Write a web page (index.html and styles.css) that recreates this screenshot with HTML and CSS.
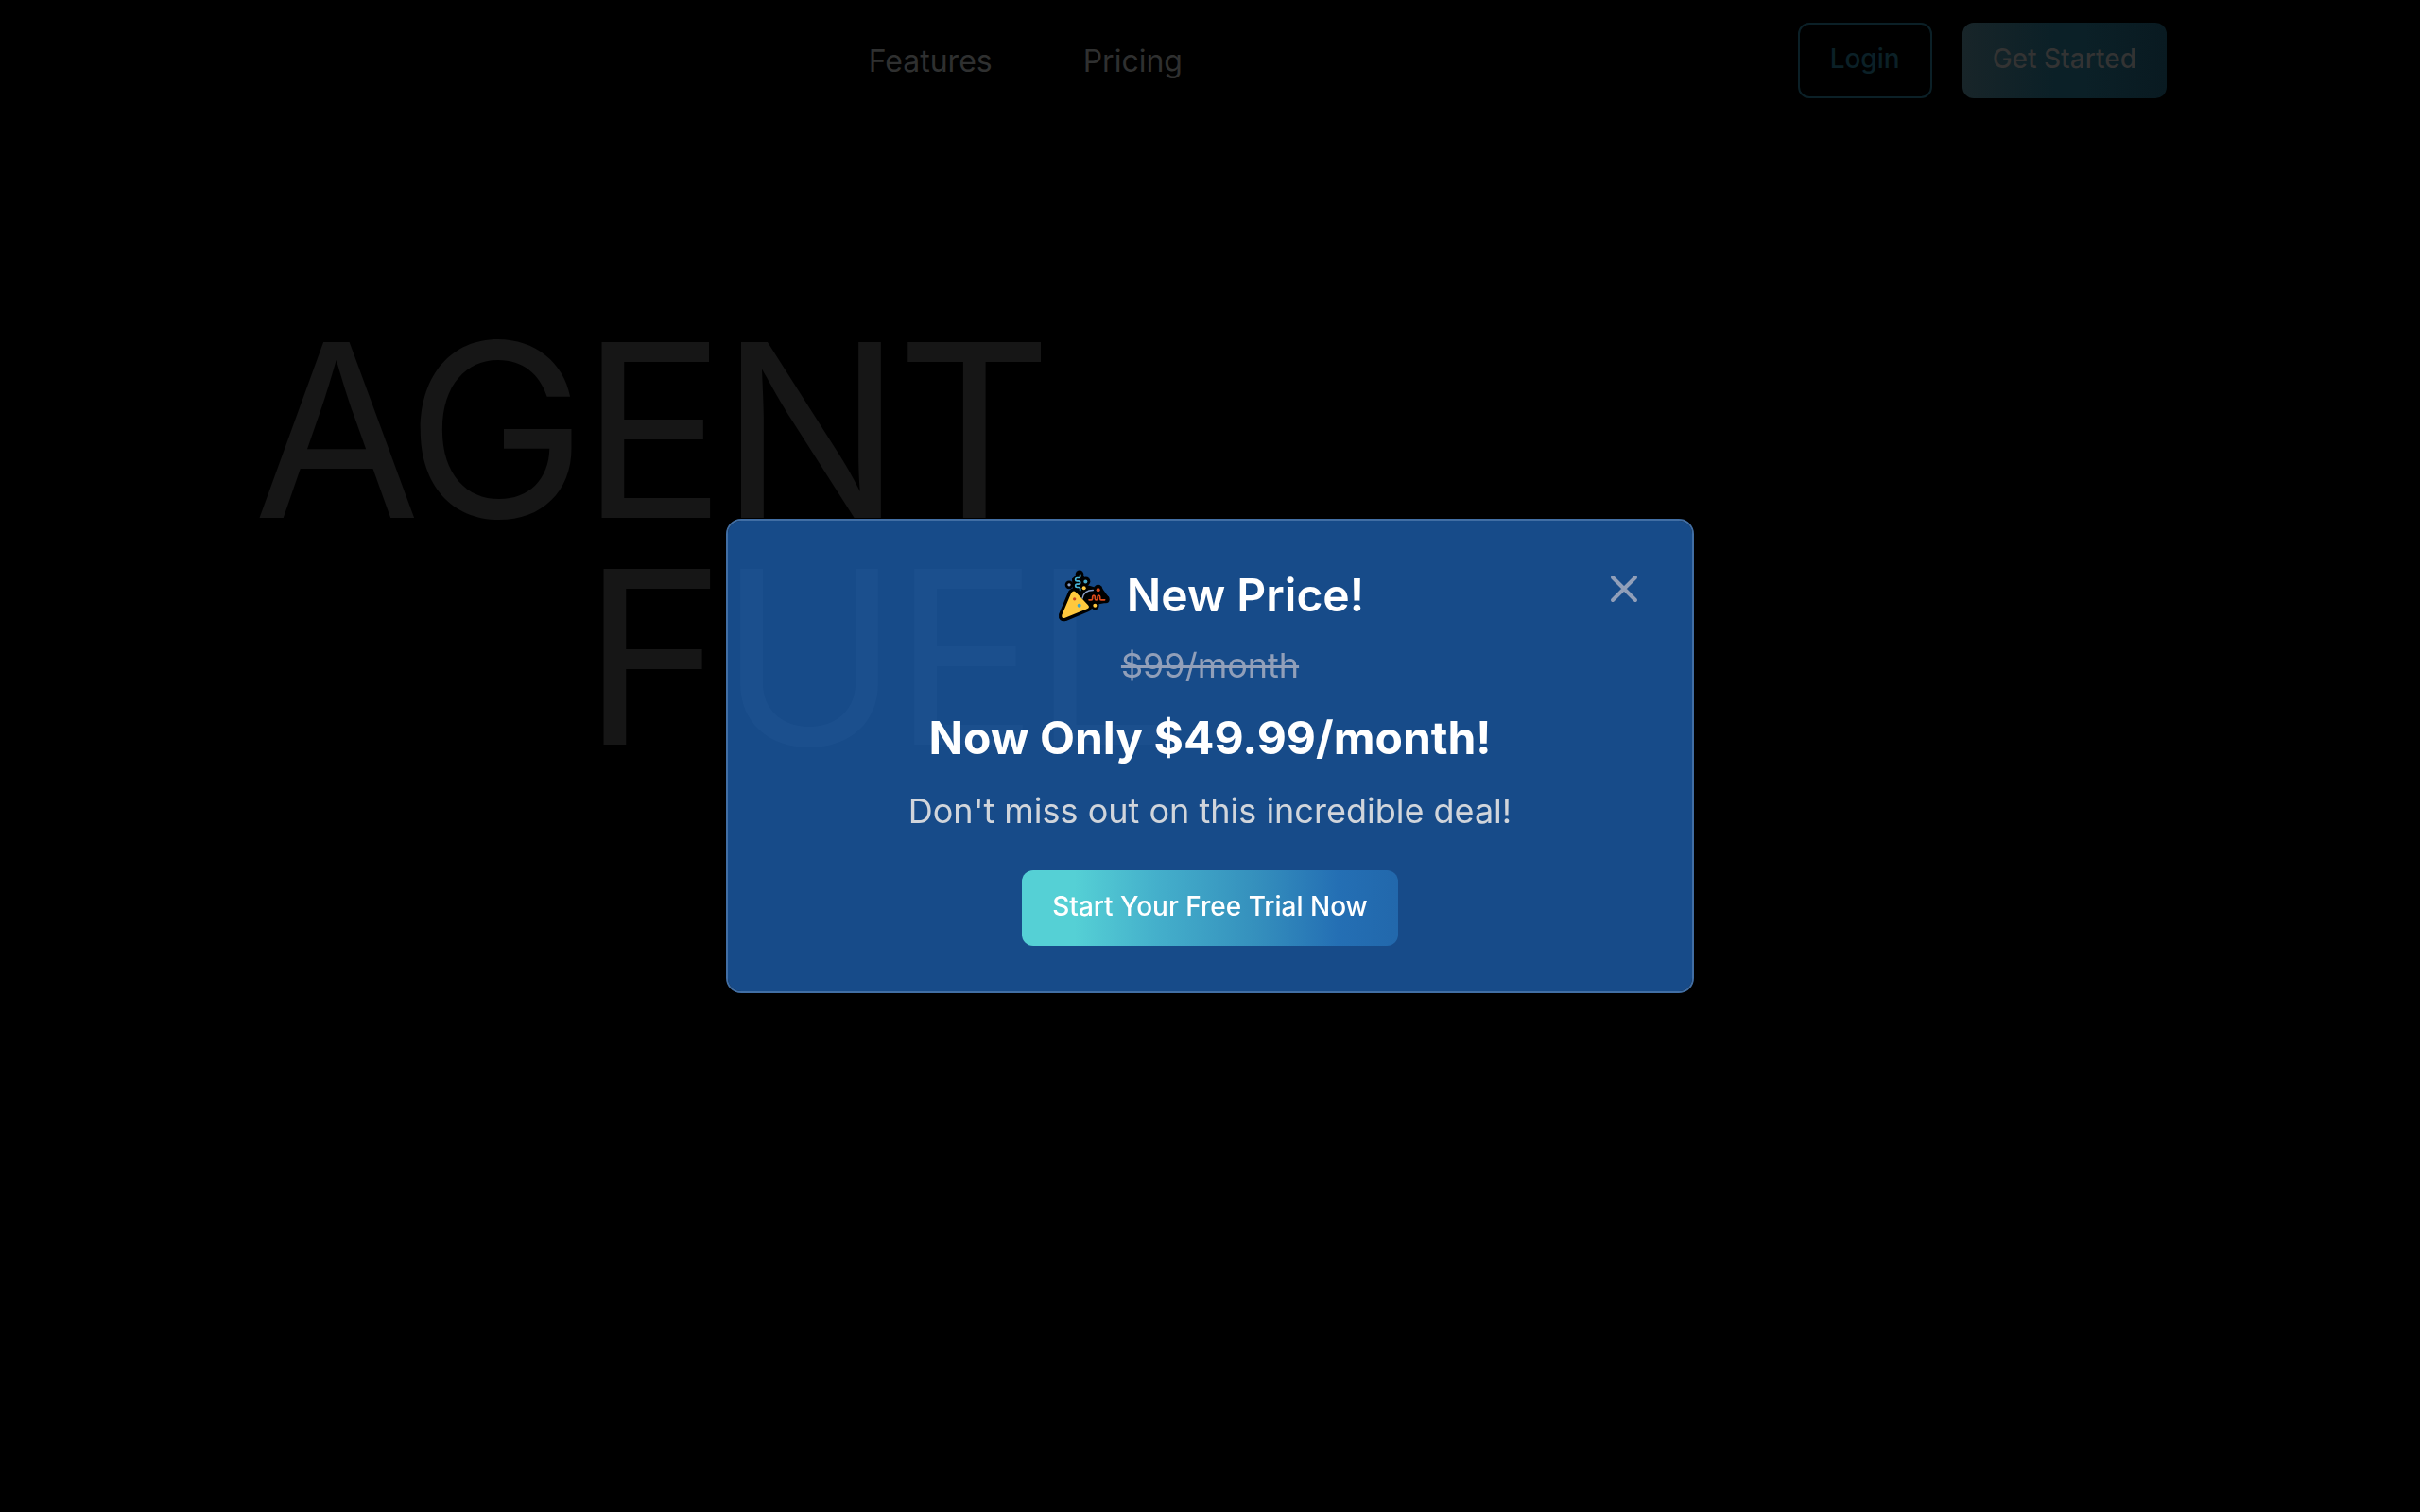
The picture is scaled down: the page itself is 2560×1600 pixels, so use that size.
FILE: index.html
```
<!DOCTYPE html>
<html lang="en">
<head>
    <meta charset="UTF-8">
    <meta name="viewport" content="width=device-width, initial-scale=1.0">
    <title>Agent Fuel</title>
    <link rel="stylesheet" href="styles.css">
</head>
<body>
    <header class="header">
        <div class="logo"></div>
        <nav class="nav">
            <a href="#features">Features</a>
            <a href="#pricing">Pricing</a>
        </nav>
        <div class="actions">
            <button type="button" class="btn btn-outline">Login</button>
            <button type="button" class="btn btn-dim">Get Started</button>
        </div>
    </header>

    <main class="hero">
        <h1 class="hero-title">
            <span>AGENT</span>
            <span class="hero-indent">FUEL</span>
        </h1>
    </main>

    <!-- Promo modal -->
    <div class="overlay">
        <div class="modal" role="dialog" aria-modal="true" aria-labelledby="promo-title">
            <button type="button" class="modal-close" aria-label="Close">
                <svg viewBox="0 0 24 24" fill="none" stroke="currentColor" stroke-width="2" stroke-linecap="round">
                    <path d="M6 6l12 12M18 6L6 18"/>
                </svg>
            </button>
            <h2 class="modal-title" id="promo-title">
                <svg class="popper" viewBox="85 68 180 164" fill="none" stroke-linecap="round" stroke-linejoin="round" aria-hidden="true">
                    <g fill="#000">
                        <circle cx="127" cy="115" r="13"/>
                        <circle cx="180" cy="104" r="14"/>
                        <circle cx="160" cy="82" r="13"/>
                        <circle cx="219" cy="129" r="14"/>
                        <circle cx="209" cy="181" r="13"/>
                        <circle cx="243" cy="161" r="12"/>
                        <path d="M136 96L150 84L172 84L186 116L206 122L230 124L252 154L246 172L222 176L190 182L140 150Z"/>
                    </g>
                    <path d="M134 140Q142 130 150 140L187 179Q194 187 184 191L114 220Q102 223 104 211Z" fill="#ffc83d" stroke="#000" stroke-width="20"/>
                    <path d="M134 140Q142 130 150 140L187 179Q194 187 184 191L114 220Q102 223 104 211Z" fill="#ffc83d"/>
                    <path d="M162 83v6q0 4-5 4h-5q-5 0-5 5t5 5h5q5 0 5 5t-5 5h-5q-5 0-5 5t5 5h5q5 0 5 5v5" stroke="#45b3d6" stroke-width="5"/>
                    <path d="M169 158Q174 132 203 132" stroke="#8b9fc7" stroke-width="4"/>
                    <path d="M190 163h7q4 0 4-5v-4q0-5 4-5t4 5v4q0 5 4 5t4-5v-4q0-5 4-5t4 5v4q0 5 4 5h11" stroke="#e04a1a" stroke-width="5"/>
                    <circle cx="127" cy="115" r="5" fill="#8b9fc7"/>
                    <circle cx="179" cy="105" r="6" fill="#45a5c4"/>
                    <circle cx="174" cy="125" r="6" fill="#ffc83d"/>
                    <circle cx="219" cy="131" r="6" fill="#d94a1d"/>
                    <circle cx="209" cy="181" r="6" fill="#ffc83d"/>
                    <circle cx="144" cy="160" r="5" fill="#c9471f"/>
                    <circle cx="159" cy="181" r="6" fill="#45a5c4"/>
                </svg>
                New Price!
            </h2>
            <p class="old-price"><s>$99/month</s></p>
            <p class="new-price">Now Only $49.99/month!</p>
            <p class="note">Don't miss out on this incredible deal!</p>
            <button type="button" class="btn btn-primary">Start Your Free Trial Now</button>
        </div>
    </div>
</body>
</html>
```
FILE: styles.css
```
* {
    box-sizing: border-box;
}
body {
    margin: 0;
    min-height: 100vh;
    background: #000;
    font-family: Inter, sans-serif;
    color: #fff;
}
h1, h2, p {
    margin: 0;
}
.header {
    display: flex;
    align-items: center;
    justify-content: space-between;
    max-width: 2024px;
    margin: 0 auto;
    padding: 24px 0;
}
.nav {
    display: flex;
    gap: 96px;
    padding-top: 2px;
}
.nav a {
    color: #2f3030;
    font-size: 32px;
    line-height: 48px;
    text-decoration: none;
}
.actions {
    display: flex;
    gap: 32px;
}
.btn {
    height: 80px;
    padding: 0 32px 4px;
    border: 0;
    border-radius: 12px;
    font-family: inherit;
    font-size: 28px;
    font-weight: 500;
    line-height: 40px;
    color: #fff;
    cursor: pointer;
}
.btn-outline {
    border: 2px solid #0b2027;
    background: transparent;
    color: #0b2027;
}
.btn-dim {
    background: linear-gradient(90deg, #182529, #0b2027 45%, #0b2027 60%, #091a21);
    color: #333;
}
.btn-primary {
    background: linear-gradient(90deg, #55d0d5 0%, #55d0d5 14%, #44afcb 36%, #3590bd 62%, #246fb4 84%, #2268ac 100%);
}
.hero {
    max-width: 2024px;
    margin: 0 auto;
    padding-top: 207px;
}
.hero-title {
    font-size: 256px;
    font-weight: 400;
    line-height: 240px;
    letter-spacing: -0.025em;
    color: #161616;
}
.hero-title span {
    display: block;
}
.hero-indent {
    padding-left: 348px;
}
.overlay {
    position: fixed;
    inset: 0;
    display: flex;
    align-items: center;
    justify-content: center;
}
/* slightly see-through so the hero text shows behind it */
.modal {
    position: relative;
    width: 100%;
    max-width: 1024px;
    padding: 48px;
    border: 2px solid #416ea4;
    border-radius: 16px;
    background: rgba(29, 94, 171, 0.8);
    background-clip: padding-box;
    text-align: center;
}
.modal-close {
    position: absolute;
    top: 48px;
    right: 48px;
    width: 48px;
    height: 48px;
    padding: 0;
    border: 0;
    background: none;
    color: #919fb9;
    cursor: pointer;
}
.modal-close svg {
    display: block;
}
.modal-title {
    display: flex;
    align-items: center;
    justify-content: center;
    gap: 15px;
    margin-bottom: 14px;
    font-size: 48px;
    font-weight: 600;
    line-height: 62px;
}
.popper {
    width: 60px;
    height: 55px;
}
.old-price,
.note {
    font-size: 36px;
    line-height: 58px;
}
.old-price {
    margin-bottom: 16px;
    color: #919fb9;
}
.new-price {
    margin-bottom: 16px;
    font-size: 48px;
    font-weight: 700;
    line-height: 64px;
}
.note {
    margin-bottom: 34px;
    color: #d1d5db;
}
```
